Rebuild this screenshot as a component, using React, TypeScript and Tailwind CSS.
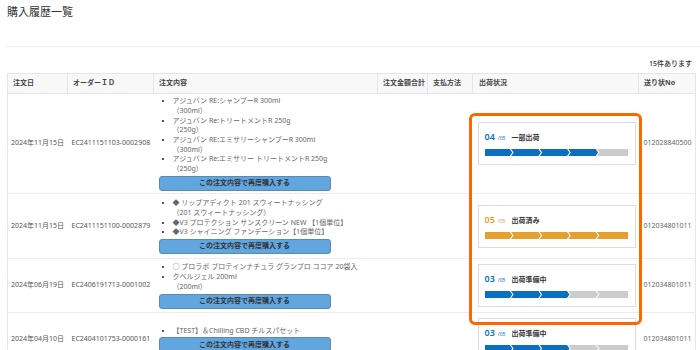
const font = { fontFamily: '"Noto Sans", "Noto Sans CJK JP", sans-serif' };

type Order = {
  date: string;
  id: string;
  items: string[][];
  step: number;
  label: string;
  color: string;
  track: string;
  h: string;
};

const orders: Order[] = [
  {
    date: '2024年11月15日',
    id: 'EC2411151103-0002908',
    items: [
      ['アジュバン RE:シャンプーR 300ml', '（300ml）'],
      ['アジュバン Re:トリートメントR 250g', '（250g）'],
      ['アジュバン RE:エミサリーシャンプーR 300ml', '（300ml）'],
      ['アジュバン Re:エミサリー トリートメントR 250g', '（250g）'],
    ],
    step: 4,
    label: '一部出荷',
    color: '#0a70bd',
    track: '012028840500',
    h: 'h-[100px]',
  },
  {
    date: '2024年11月15日',
    id: 'EC2411151100-0002879',
    items: [
      ['◆ リップアディクト 201 スウィートナッシング', '（201 スウィートナッシング）'],
      ['◆V3 プロテクション サンスクリーン NEW 【1個単位】'],
      ['◆V3 シャイニング ファンデーション【1個単位】'],
    ],
    step: 5,
    label: '出荷済み',
    color: '#e6a030',
    track: '012034801011',
    h: 'h-[65px]',
  },
  {
    date: '2024年06月19日',
    id: 'EC2406191713-0001002',
    items: [
      ['○ プロラボ プロテインナチュラ グランプロ ココア 20袋入'],
      ['クベルジェル 200ml', '（200ml）'],
    ],
    step: 3,
    label: '出荷準備中',
    color: '#0a70bd',
    track: '012034801011',
    h: 'h-[54px]',
  },
  {
    date: '2024年04月10日',
    id: 'EC2404101753-0000161',
    items: [['【TEST】＆Chilling CBD チルスパセット']],
    step: 3,
    label: '出荷準備中',
    color: '#0a70bd',
    track: '012034801011',
    h: 'h-[53px]',
  },
];

function Steps({ done, color }: { done: number; color: string }) {
  const w = 143;
  const h = 7;
  const seg = w / 5;
  const p = 2.5;
  const gap = 1.3;
  return (
    <svg width={w} height={h} className="block">
      {[0, 1, 2, 3, 4].map((i) => {
        const x0 = i * seg;
        const x1 = (i + 1) * seg - gap;
        const last = i === 4;
        const pts: number[][] = [];
        pts.push(i === 0 ? [0, 0] : [x0 - p, 0]);
        if (last) {
          pts.push([w, 0], [w, h]);
        } else {
          pts.push([x1 - p, 0], [x1, h / 2], [x1 - p, h]);
        }
        pts.push(i === 0 ? [0, h] : [x0 - p, h]);
        if (i > 0) pts.push([x0, h / 2]);
        return (
          <polygon
            key={i}
            points={pts.map((q) => q.join(',')).join(' ')}
            fill={i < done ? color : '#cccccc'}
          />
        );
      })}
    </svg>
  );
}

function StatusCard({ o }: { o: Order }) {
  return (
    <div className="w-[158px] border border-[#dddddd] bg-white px-[6px] pt-[9px] pb-[8px]">
      <div className="flex items-baseline h-[12px]">
        <span className="text-[9px] font-semibold leading-none" style={{ color: o.color }}>
          0{o.step}
        </span>
        <span className="ml-[3px] text-[5px] leading-none" style={{ color: o.color }}>
          /05
        </span>
        <span className="ml-[6px] text-[7px] font-bold leading-none text-[#333]">{o.label}</span>
      </div>
      <div className="mt-[5px]">
        <Steps done={o.step} color={o.color} />
      </div>
    </div>
  );
}

export default function App() {
  const th = 'border-r border-[#e6e6e6] px-[5px] text-left font-bold text-[7px] text-[#444] whitespace-nowrap';
  return (
    <div className="w-[700px] h-[350px] overflow-hidden bg-white" style={font}>
      <h1 className="pl-[7px] pt-[5px] text-[11px] leading-[14px] text-[#333]">購入履歴一覧</h1>
      <div className="ml-[5px] mt-[27px] border-t border-[#eeeeee]" />
      <div className="mt-[12px] pr-[8px] text-right text-[7px] leading-[10px] text-[#333] font-medium">
        15件あります
      </div>
      <div className="relative ml-[7px] mt-[4px] w-[688px]">
        <table className="w-[688px] table-fixed border-collapse border-t border-r border-l border-[#e6e6e6]">
          <colgroup>
            <col className="w-[60px]" />
            <col className="w-[86px]" />
            <col className="w-[224px]" />
            <col className="w-[50px]" />
            <col className="w-[45px]" />
            <col className="w-[166px]" />
            <col className="w-[57px]" />
          </colgroup>
          <thead>
            <tr className="h-[20px] bg-[#f8f8f8] border-b border-[#e6e6e6]">
              <th className={th}>注文日</th>
              <th className={th}>オーダーＩＤ</th>
              <th className={th}>注文内容</th>
              <th className={th + ' pr-0'}>注文金額合計</th>
              <th className={th}>支払方法</th>
              <th className={th + ' pl-[6px]'}>出荷状況</th>
              <th className={th}>送り状No</th>
            </tr>
          </thead>
          <tbody>
            {orders.map((o) => (
              <tr key={o.id} className={`${o.h} border-b border-[#ececec] align-middle`}>
                <td className="pl-[3px] text-[7px] text-[#555] whitespace-nowrap">{o.date}</td>
                <td className="pl-[4px] text-[7px] text-[#555] whitespace-nowrap">{o.id}</td>
                <td className="pl-[5px] pr-0">
                  <ul className="list-[square] pl-[14px] text-[7px] leading-[9.7px] text-[#666] marker:text-[#555]">
                    {o.items.map((it, k) => (
                      <li key={k} className="whitespace-nowrap">
                        {it[0]}
                        {it[1] && (
                          <>
                            <br />
                            {it[1]}
                          </>
                        )}
                      </li>
                    ))}
                  </ul>
                  <button className="mt-[2px] block h-[15px] w-[172px] rounded-[3px] border border-[#5f88ad] bg-[#62a6e0] text-[7px] font-bold text-[#333]">
                    この注文内容で再度購入する
                  </button>
                </td>
                <td />
                <td />
                <td className="pl-[5px]">
                  <StatusCard o={o} />
                </td>
                <td className="pl-[5px] text-[7px] text-[#666]">{o.track}</td>
              </tr>
            ))}
          </tbody>
        </table>
        <div className="pointer-events-none absolute left-[462px] top-[40px] h-[212px] w-[173px] rounded-[6px] border-[3px] border-[#ff6600]" />
      </div>
    </div>
  );
}
